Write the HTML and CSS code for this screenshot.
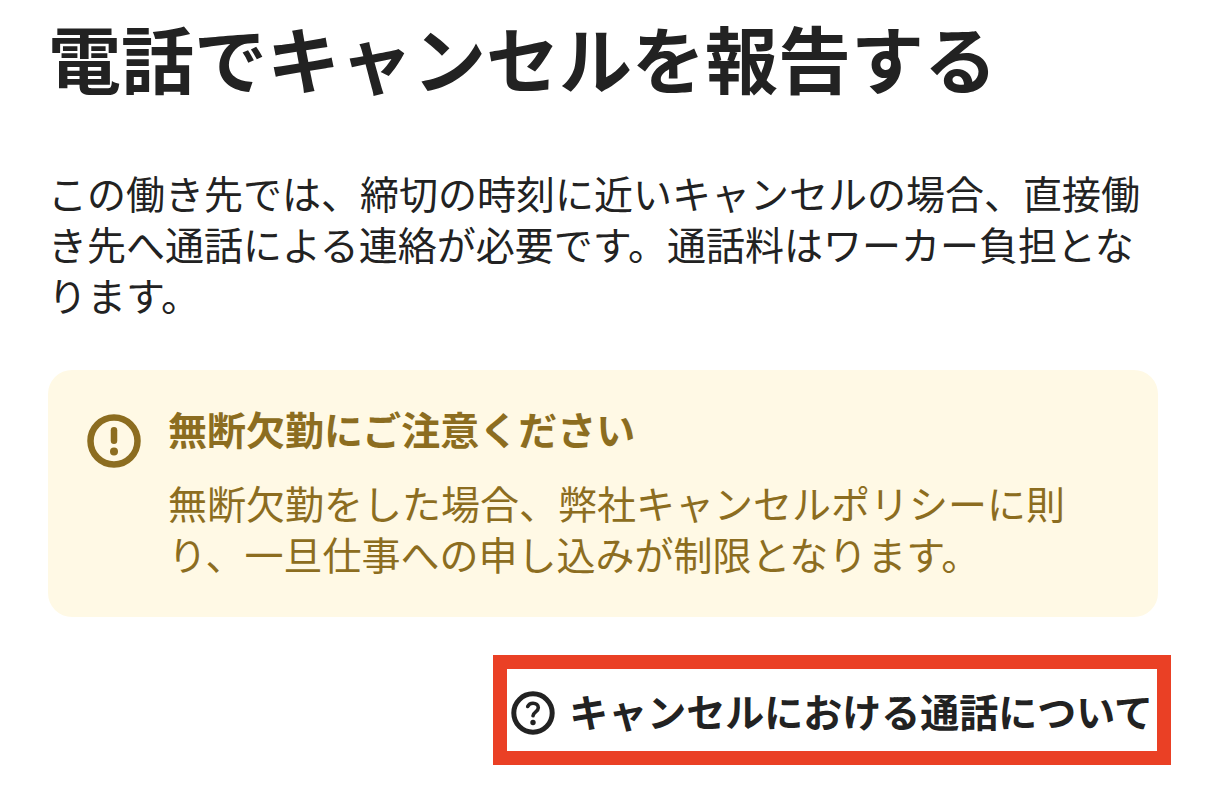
FILE: index.html
```html
<!DOCTYPE html>
<html lang="ja">
<head>
    <meta charset="UTF-8">
    <title>電話でキャンセルを報告する</title>
    <link rel="stylesheet" href="styles.css">
</head>
<body>
    <main class="page">
        <h1 class="title">電話でキャンセルを報告する</h1>
        <p class="lead">この働き先では、締切の時刻に近いキャンセルの場合、直接働き先へ通話による連絡が必要です。通話料はワーカー負担となります。</p>
        <section class="notice">
            <svg class="notice-icon" viewBox="0 0 54 54" aria-hidden="true">
                <circle cx="27" cy="27" r="23.5" fill="none" stroke="currentColor" stroke-width="6.5"/>
                <path d="M27 16.200v10.600" stroke="currentColor" stroke-width="6.500" stroke-linecap="round"/>
                <circle cx="27" cy="37.500" r="4" fill="currentColor"/>
            </svg>
            <div class="notice-body">
                <h2 class="notice-title">無断欠勤にご注意ください</h2>
                <p class="notice-text">無断欠勤をした場合、弊社キャンセルポリシーに則り、一旦仕事への申し込みが制限となります。</p>
            </div>
        </section>
        <a class="help" href="#">
            <svg class="help-icon" viewBox="0 0 44 44" aria-hidden="true">
                <circle cx="22" cy="22" r="19.200" fill="none" stroke="currentColor" stroke-width="5"/>
                <path d="M16.700 15.500C17.700 13.300 19.600 12.200 22 12.200C25 12.200 27.300 14 27.300 16.800C27.300 20.800 22.200 20.800 22 24.800" fill="none" stroke="currentColor" stroke-width="3.600" stroke-linecap="round" stroke-linejoin="round"/>
                <circle cx="22" cy="31.500" r="2.700" fill="currentColor"/>
            </svg>
            <span>キャンセルにおける通話について</span>
        </a>
    </main>
</body>
</html>
```

FILE: styles.css
```css
*{
    padding: 0;
    margin: 0;
    box-sizing: border-box;
}
body{
    background: #fff;
    color: #222;
    font-family: "Noto Sans CJK JP", sans-serif;
    font-size: 39px;
    line-height: 51px;
}
.page{
    display: flex;
    flex-direction: column;
    padding: 8px 48px 24px;
}
.title{
    font-size: 73px;
    line-height: 96px;
    font-weight: bold;
}
.lead{
    margin-top: 63px;
}
.notice{
    display: flex;
    gap: 27px;
    margin-top: 50px;
    padding: 33px 39px 38px;
    border-radius: 24px;
    background: #fff9e5;
    color: #8c6d20;
}
.notice-icon{
    flex: none;
    width: 54px;
    height: 54px;
    margin-top: 11px;
}
.notice-title{
    font-size: 39px;
    line-height: 51px;
    font-weight: bold;
}
.notice-text{
    margin-top: 23px;
}
.help{
    display: flex;
    align-items: center;
    align-self: flex-end;
    gap: 14px;
    margin-top: 38px;
    margin-right: -13px;
    padding: 16px 4px 15px;
    border: 14px solid #ea4025;
    color: #222;
    font-weight: bold;
    text-decoration: none;
    white-space: nowrap;
}
.help-icon{
    flex: none;
    width: 44px;
    height: 44px;
    margin-top: 4px;
}
```
